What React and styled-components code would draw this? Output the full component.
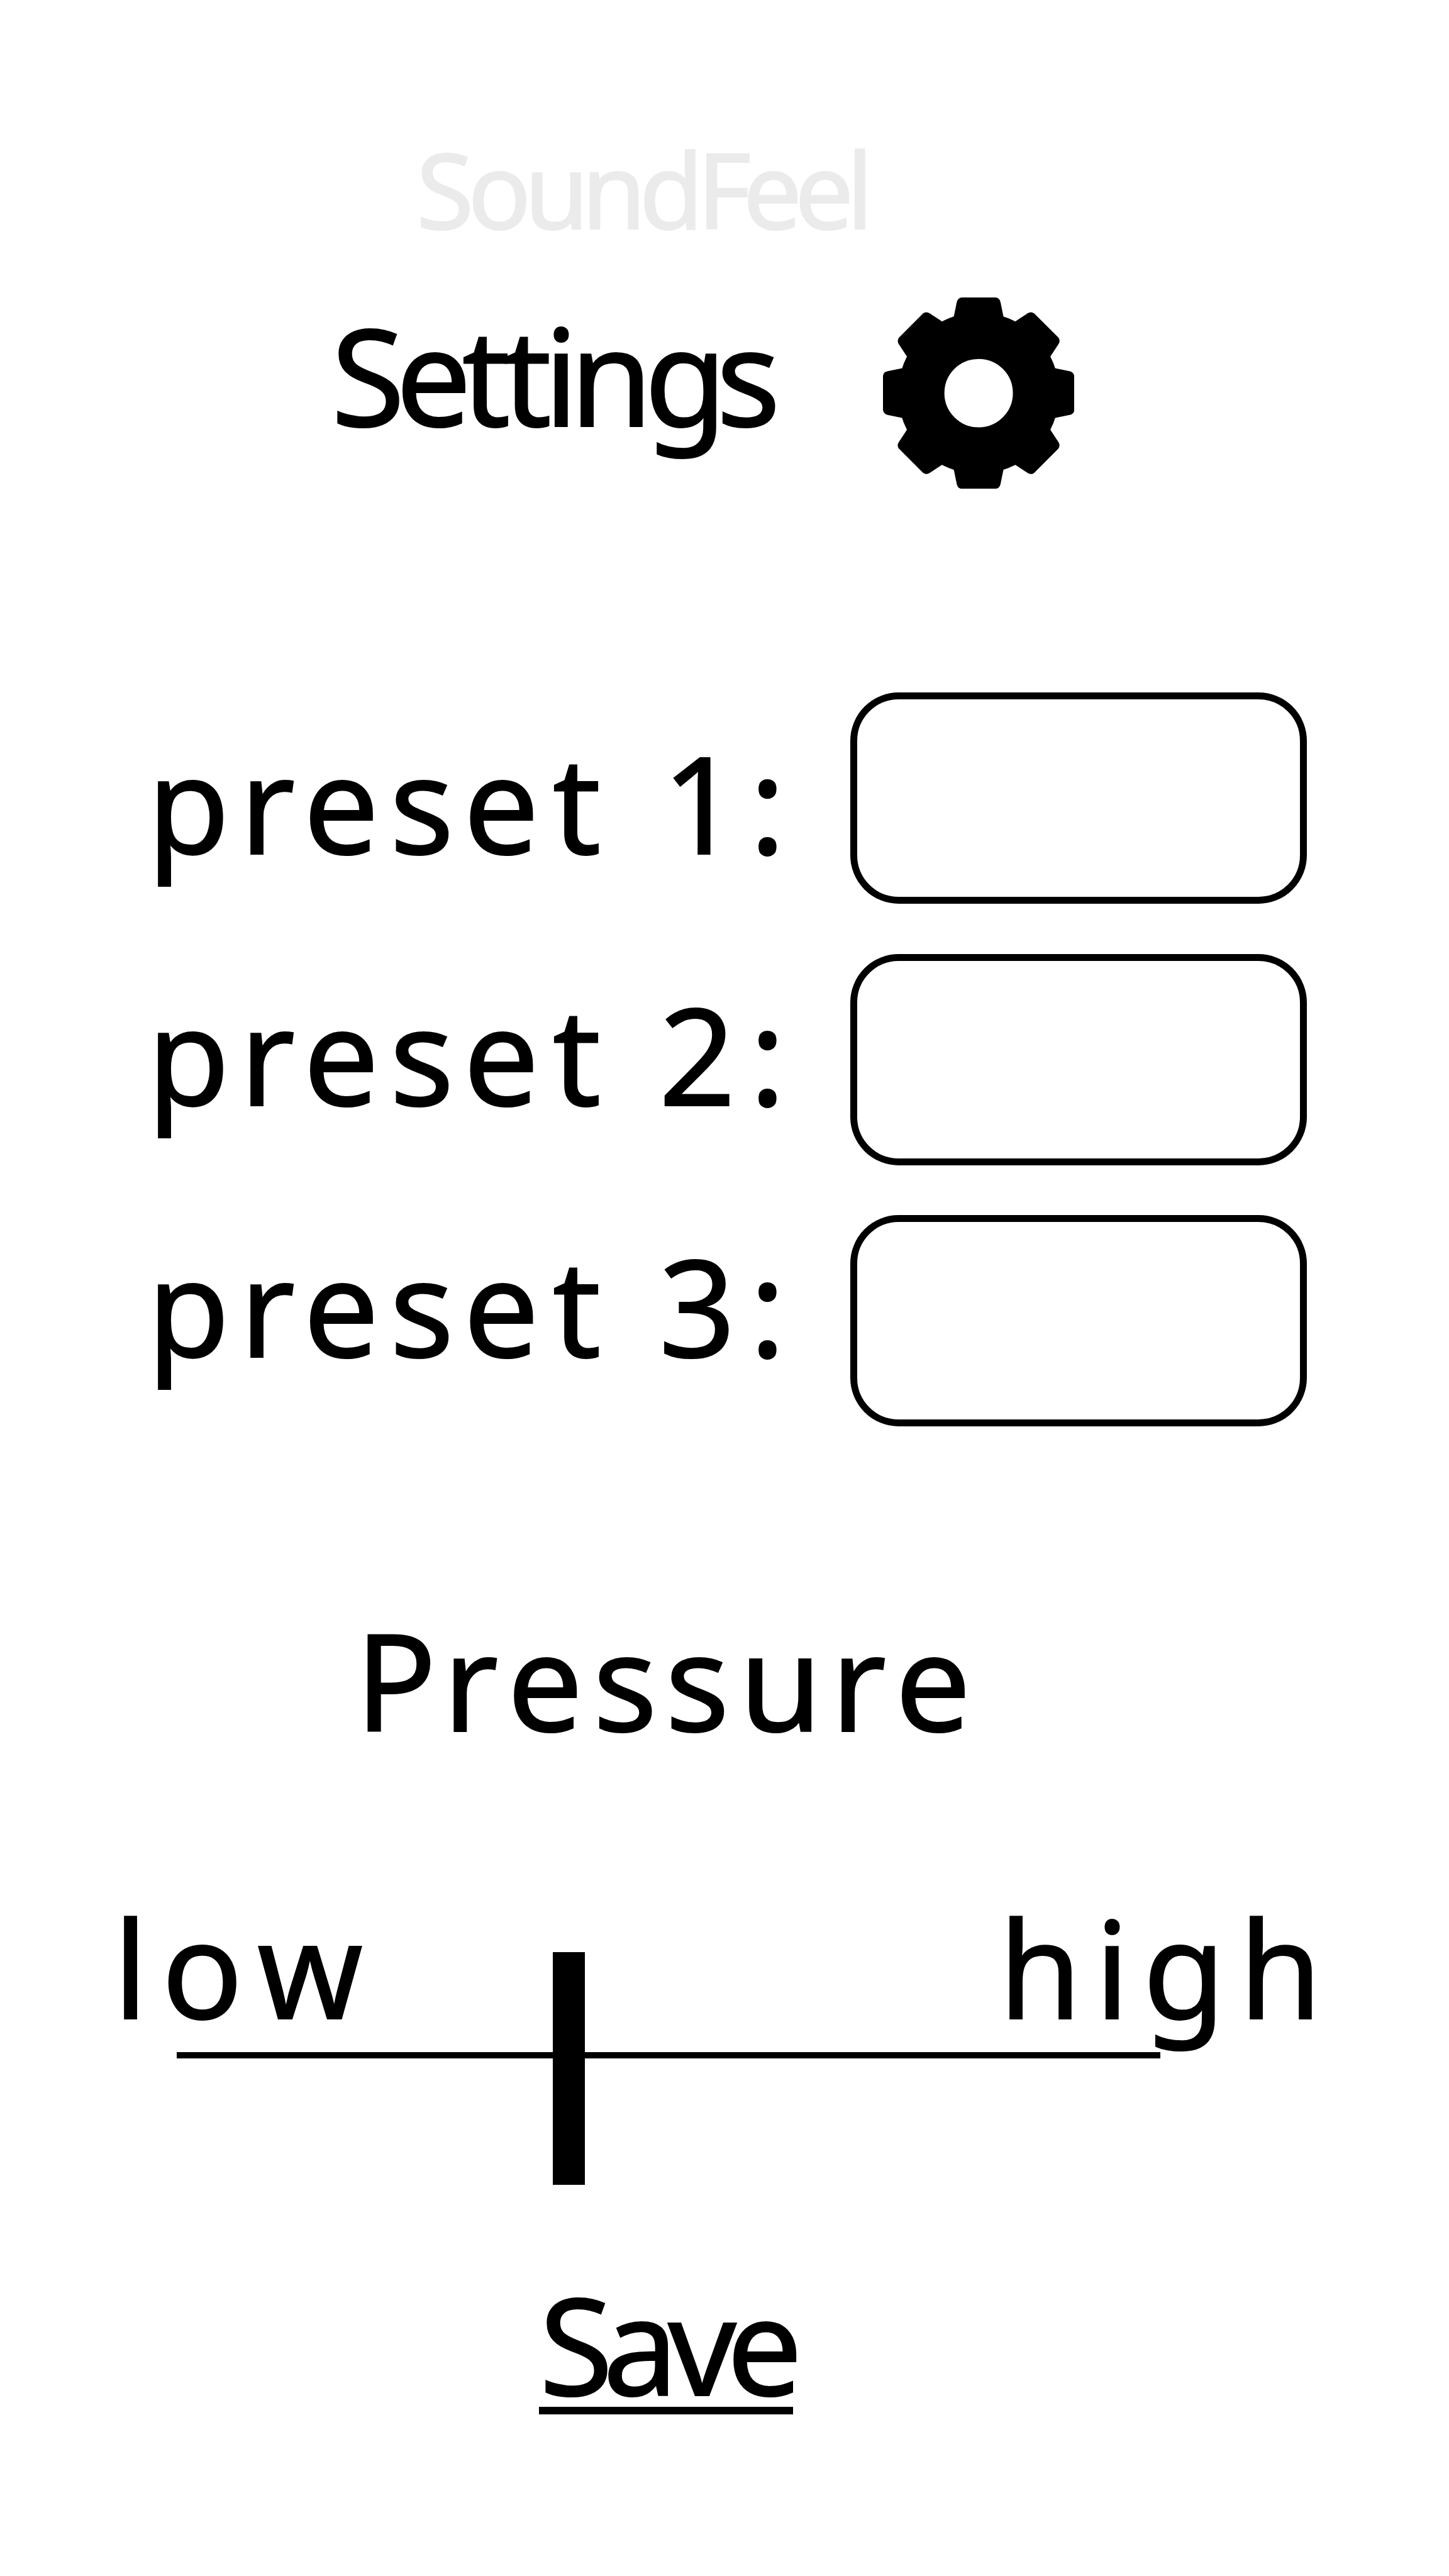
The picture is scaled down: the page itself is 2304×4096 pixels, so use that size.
import React from "react";
import styled, { createGlobalStyle } from "styled-components";

const GlobalStyle = createGlobalStyle`
  html, body { margin: 0; padding: 0; background: #fff; }
  * { box-sizing: border-box; }
`;

const Page = styled.main`
  display: flex;
  flex-direction: column;
  width: 2304px;
  height: 4096px;
  padding-top: 199.3px;
  overflow: hidden;
  background: #fff;
  color: #000;
  font-family: "Noto Sans", "Open Sans", sans-serif;
  font-kerning: none;
  font-size: 213.7px;
  line-height: 240px;
  white-space: pre;
  -webkit-text-stroke: 2px currentColor;
`;

const Letter = styled.span`
  letter-spacing: ${(p) => p.$gap}px;
`;

const Brand = styled.div`
  height: 200px;
  margin-left: 661.8px;
  color: #ebebeb;
  font-size: 167px;
  line-height: 200px;
`;

const Header = styled.header`
  display: flex;
  align-items: flex-start;
  height: 304.2px;
  margin-top: 73.6px;
  padding-left: 526.4px;
`;

const Title = styled.h1`
  width: 877.8px;
  margin: 3.5px 0 0;
  font-size: inherit;
  font-weight: 400;
`;

const Gear = styled.svg`
  display: block;
  width: 304.2px;
  height: 304.2px;
`;

const Presets = styled.section`
  display: flex;
  flex-direction: column;
  height: 1166.6px;
  margin-top: 324.4px;
  justify-content: space-between;
`;

const PresetRow = styled.label`
  display: grid;
  grid-template-columns: 1118.4px 725.6px;
  height: 335.6px;
  padding-left: 233.9px;
`;

const PresetName = styled.span`
  padding-top: ${(p) => p.$drop}px;
`;

const PresetInput = styled.input`
  width: 100%;
  height: 100%;
  border: 11px solid #000;
  border-radius: 77px;
  background: #fff;
  outline: none;
`;

const Heading = styled.h2`
  height: 240px;
  margin: 282.6px 0 0 564.8px;
  font-size: inherit;
  font-weight: 400;
`;

const Range = styled.section`
  display: flex;
  flex-direction: column;
  height: 466px;
  margin-top: 217.6px;
`;

const RangeLabels = styled.div`
  display: grid;
  grid-template-columns: 1407.9px auto;
  height: 240px;
  padding-left: 180.1px;
`;

const RangeLabel = styled.span`
  display: block;
`;

const Track = styled.div`
  position: relative;
  width: 1564px;
  height: 10px;
  margin: 14.7px 0 0 281.2px;
  background: #000;
`;

const Handle = styled.div`
  position: absolute;
  top: -158.5px;
  left: 597.4px;
  width: 51px;
  height: 370px;
  background: #000;
`;

const Save = styled.button`
  width: 404px;
  height: 212.7px;
  margin: 152.2px 0 0 857.4px;
  padding: 0;
  border: 0;
  border-bottom: 12px solid #000;
  background: none;
  color: inherit;
  font: inherit;
  line-height: 200px;
  text-align: left;
`;

const SaveText = styled.span`
  display: block;
  height: 200px;
  width: 404px;
`;

const TOOTH =
  "M-133 -410 L-117 -488 Q-112 -509 -91 -512.5 L92 -512.5 Q112 -510 117 -488 L133 -410 L133 -300 L-133 -300 Z";

function GearIcon() {
  return (
    <Gear viewBox="-512.5 -512.5 1025 1025" aria-hidden="true">
      <circle r="307.5" fill="none" stroke="#000" strokeWidth="248" />
      {[0, 45, 90, 135, 180, 225, 270, 315].map((a) => (
        <path key={a} d={TOOTH} transform={`rotate(${a})`} />
      ))}
    </Gear>
  );
}

// Sets a word with its own gap after each letter.
function Tracked({ text, gaps }) {
  return [...text].map((char, i) => (
    <Letter key={i} $gap={gaps[i] ?? 0}>
      {char}
    </Letter>
  ));
}

const PRESETS = [
  { name: "preset 1:", drop: 54.1, gaps: [15.8, 12.8, 16.8, 14.8, 21.2, 20.8, 20.8, 16.8] },
  { name: "preset 2:", drop: 39.1, gaps: [15.8, 12.8, 16.8, 14.8, 21.2, 18.2, 18.2, 22] },
  { name: "preset 3:", drop: 23.7, gaps: [15.8, 12.8, 16.8, 14.8, 21.2, 18.2, 18.2, 22] },
];

export default function App() {
  return (
    <>
      <GlobalStyle />
      <Page>
        <Brand>
          <Tracked
            text="SoundFeel"
            gaps={[-9.8, -11.2, -12.3, -11.5, -10.9, -13.4, -12, -11.9]}
          />
        </Brand>
        <Header>
          <Title>
            <Tracked
              text="Settings"
              gaps={[-14.5, -15.3, -11.6, -12.5, -13.9, -13.5, -17.1]}
            />
          </Title>
          <GearIcon />
        </Header>
        <Presets>
          {PRESETS.map((p) => (
            <PresetRow key={p.name}>
              <PresetName $drop={p.drop}>
                <Tracked text={p.name} gaps={p.gaps} />
              </PresetName>
              <PresetInput />
            </PresetRow>
          ))}
        </Presets>
        <Heading>
          <Tracked
            text="Pressure"
            gaps={[10.2, 13.9, 15.7, 12.4, 15.5, 13.7, 13.9]}
          />
        </Heading>
        <Range>
          <RangeLabels>
            <RangeLabel>
              <Tracked text="low" gaps={[21.8, 22.7]} />
            </RangeLabel>
            <RangeLabel>
              <Tracked text="high" gaps={[20.7, 21.4, 21.3]} />
            </RangeLabel>
          </RangeLabels>
          <Track>
            <Handle />
          </Track>
        </Range>
        <Save>
          <SaveText>
            <Tracked text="Save" gaps={[-16.2, -16.1, -15.3]} />
          </SaveText>
        </Save>
      </Page>
    </>
  );
}
